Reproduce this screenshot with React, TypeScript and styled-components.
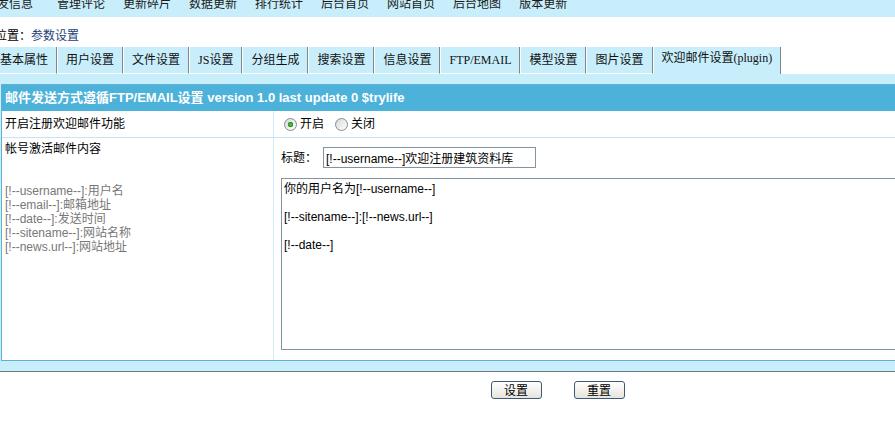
import React from "react";
import styled, { createGlobalStyle } from "styled-components";

const GlobalST = createGlobalStyle`
    html, body {
        margin: 0;
        padding: 0;
        background: #fff;
        overflow: hidden;
    }
    body {
        font-family: "Liberation Sans", "Noto Sans CJK SC", sans-serif;
        font-size: 12px;
        color: #000;
    }
`;

const PageST = styled.div`
    width: 1115px;
`;

const NavST = styled.div`
    height: 26px;
    margin-top: -9px;
    background: #c9eefb;
    display: flex;
    align-items: center;
    gap: 18px;
`;

const NavItemST = styled.span`
    line-height: 14px;
    color: #1a1a1a;
    white-space: nowrap;
    &:first-child {
        margin-left: -15px;
        margin-right: 6px;
    }
`;

const CrumbST = styled.div`
    margin: 12px 0 4px -5px;
    line-height: 14px;
    & a {
        color: #1d3f78;
        text-decoration: none;
    }
`;

const TabRowST = styled.div`
    display: flex;
    align-items: flex-end;
    & > span:first-child {
        margin-left: -9px;
    }
`;

const TabST = styled.span<{ $active?: boolean }>`
    padding: 0 8px;
    height: ${(p) => (p.$active ? "27px" : "26px")};
    line-height: ${(p) => (p.$active ? "22px" : "26px")};
    background: #c9eefb;
    border-left: 1px solid #fff;
    border-right: 1px solid #7b878b;
    border-bottom: ${(p) => (p.$active ? "none" : "1px solid #fff")};
    font-family: "Liberation Serif", "Noto Sans CJK SC", serif;
    white-space: nowrap;
    color: #111;
`;

const FrameST = styled.div`
    background: #c9eefb;
    padding: 10px 0 10px 1px;
    border-bottom: 1px solid #6d7b80;
`;

const PanelST = styled.div`
    border: 1px solid #5fb0d2;
    background: #fff;
`;

const HeadST = styled.div`
    height: 26px;
    line-height: 26px;
    padding-left: 3px;
    background: #4cb2da;
    color: #fff;
    font-weight: bold;
    font-size: 13px;
    white-space: nowrap;
`;

const RowST = styled.div<{ $h: number; $last?: boolean }>`
    display: grid;
    grid-template-columns: 272px 1fr;
    height: ${(p) => p.$h}px;
    border-bottom: ${(p) => (p.$last ? "none" : "1px solid #c5e5f3")};
`;

const LabelCellST = styled.div<{ $center?: boolean }>`
    border-right: 1px solid #d2ebf6;
    padding: ${(p) => (p.$center ? "0 3px" : "4px 3px")};
    display: ${(p) => (p.$center ? "flex" : "block")};
    align-items: center;
    line-height: 14px;
`;

const ValueCellST = styled.div<{ $center?: boolean }>`
    padding: ${(p) => (p.$center ? "0 0 0 10px" : "9px 0 0 7px")};
    display: ${(p) => (p.$center ? "flex" : "block")};
    align-items: center;
`;

const HintST = styled.div`
    margin-top: 28px;
    color: #777;
    line-height: 14px;
`;

const RadioLabelST = styled.label`
    display: inline-flex;
    align-items: center;
    gap: 3px;
    margin-right: 11px;
    line-height: 14px;
`;

const RadioST = styled.input`
    appearance: none;
    margin: 0;
    width: 13px;
    height: 13px;
    border-radius: 50%;
    border: 1px solid #7c8f9c;
    background: linear-gradient(135deg, #d8d8d0, #fff);
    box-sizing: border-box;
    &:checked {
        background: radial-gradient(circle at center, #5cc544 0, #2f8f21 2.5px, transparent 3px),
            linear-gradient(135deg, #d8d8d0, #fff);
    }
`;

const TitleLineST = styled.div`
    display: flex;
    align-items: center;
    gap: 6px;
    line-height: 14px;
`;

const InputST = styled.input`
    width: 213px;
    height: 21px;
    box-sizing: border-box;
    border: 1px solid #8393a0;
    padding: 0 2px;
    font: 12px "Liberation Sans", "Noto Sans CJK SC", sans-serif;
    color: #000;
`;

const AreaST = styled.textarea`
    display: block;
    margin-top: 10px;
    width: 820px;
    height: 172px;
    box-sizing: border-box;
    border: 1px solid #8393a0;
    padding: 3px 2px;
    font: 12px/14px "Liberation Sans", "Noto Sans CJK SC", sans-serif;
    color: #000;
    resize: none;
    overflow: hidden;
`;

const ButtonsST = styled.div`
    display: flex;
    justify-content: center;
    gap: 32px;
    margin-top: 9px;
`;

const BtnST = styled.button`
    width: 51px;
    height: 18px;
    padding: 0;
    border: 1px solid #3c5a78;
    border-radius: 3px;
    background: linear-gradient(#ffffff, #e6e4dc);
    font: 12px/14px "Noto Sans CJK SC", sans-serif;
    color: #000;
`;

const navs = ["收发信息", "管理评论", "更新碎片", "数据更新", "排行统计", "后台首页", "网站首页", "后台地图", "版本更新"];
const tabs = ["基本属性", "用户设置", "文件设置", "JS设置", "分组生成", "搜索设置", "信息设置", "FTP/EMAIL", "模型设置", "图片设置", "欢迎邮件设置(plugin)"];
const hints = [
    "[!--username--]:用户名",
    "[!--email--]:邮箱地址",
    "[!--date--]:发送时间",
    "[!--sitename--]:网站名称",
    "[!--news.url--]:网站地址",
];

export default function App() {
    return (
        <PageST>
            <GlobalST />
            <NavST>
                {navs.map((n) => (
                    <NavItemST key={n}>{n}</NavItemST>
                ))}
            </NavST>
            <CrumbST>
                位置：<a href="#">参数设置</a>
            </CrumbST>
            <TabRowST>
                {tabs.map((t, i) => (
                    <TabST key={t} $active={i === tabs.length - 1}>
                        {t}
                    </TabST>
                ))}
            </TabRowST>
            <FrameST>
                <PanelST>
                    <HeadST>邮件发送方式遵循FTP/EMAIL设置 version 1.0 last update 0 $trylife</HeadST>
                    <RowST $h={26}>
                        <LabelCellST $center>开启注册欢迎邮件功能</LabelCellST>
                        <ValueCellST $center>
                            <RadioLabelST>
                                <RadioST type="radio" name="open" defaultChecked />
                                开启
                            </RadioLabelST>
                            <RadioLabelST>
                                <RadioST type="radio" name="open" />
                                关闭
                            </RadioLabelST>
                        </ValueCellST>
                    </RowST>
                    <RowST $h={222} $last>
                        <LabelCellST>
                            帐号激活邮件内容
                            <HintST>
                                {hints.map((h) => (
                                    <div key={h}>{h}</div>
                                ))}
                            </HintST>
                        </LabelCellST>
                        <ValueCellST>
                            <TitleLineST>
                                标题：
                                <InputST defaultValue="[!--username--]欢迎注册建筑资料库" />
                            </TitleLineST>
                            <AreaST
                                defaultValue={"你的用户名为[!--username--]\n\n[!--sitename--]:[!--news.url--]\n\n[!--date--]"}
                            />
                        </ValueCellST>
                    </RowST>
                </PanelST>
            </FrameST>
            <ButtonsST>
                <BtnST>设置</BtnST>
                <BtnST>重置</BtnST>
            </ButtonsST>
        </PageST>
    );
}
